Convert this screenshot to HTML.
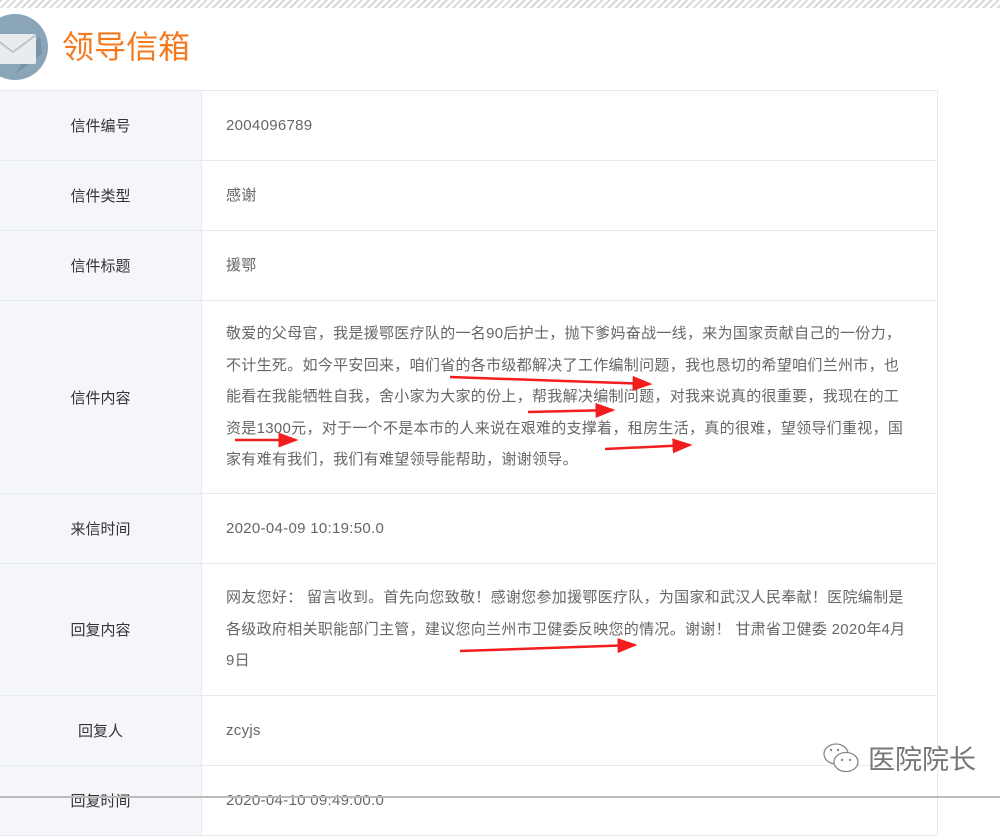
<!DOCTYPE html>
<html><head><meta charset="utf-8"><style>
body{margin:0;width:1000px;height:800px;overflow:hidden;background:#fff;font-family:"Liberation Sans","Noto Sans CJK SC",sans-serif;position:relative}
.hatch{position:absolute;left:0;top:0;width:1000px;height:8px;background:repeating-linear-gradient(135deg,#d8d8d8 0 2px,#fff 2px 5px)}
.title{position:absolute;left:62px;top:26px;font-size:32px;color:#f47a1f;line-height:42px}
table{position:absolute;left:-1px;top:90px;width:939px;border-collapse:collapse;font-size:15px;table-layout:fixed}
td{border:1px solid #e6e9ee;}
td.l{width:199px;background:#f5f6fa;color:#333;text-align:center}
td.r{color:#666;padding:0 20px 0 24px;line-height:31.5px;letter-spacing:0.3px;white-space:nowrap;overflow:hidden}
.bot{position:absolute;left:0;top:796px;width:1000px;height:2px;background:#bbb}
.wm{position:absolute;left:822px;top:738px;font-size:27px;color:#777;display:flex;align-items:center;gap:6px}
</style></head><body>
<div class="hatch"></div>
<svg style="position:absolute;left:-18px;top:14px" width="66" height="66" viewBox="0 0 66 66">
<circle cx="33" cy="33" r="33" fill="#8aa5b8"/>
<path d="M33 60 L60 40 L58 22 Z" fill="#7892a6"/>
<rect x="8" y="20" width="46" height="30" rx="2" fill="#e8ecef"/>
<path d="M8 21 L31 38 L54 21" stroke="#b9c4cc" stroke-width="2" fill="none"/>
</svg>
<div class="title">领导信箱</div>
<table>
<tr style="height:70px"><td class="l">信件编号</td><td class="r">2004096789</td></tr>
<tr style="height:70px"><td class="l">信件类型</td><td class="r">感谢</td></tr>
<tr style="height:70px"><td class="l">信件标题</td><td class="r">援鄂</td></tr>
<tr style="height:193px"><td class="l">信件内容</td><td class="r">敬爱的父母官，我是援鄂医疗队的一名90后护士，抛下爹妈奋战一线，来为国家贡献自己的一份力，<br>不计生死。如今平安回来，咱们省的各市级都解决了工作编制问题，我也恳切的希望咱们兰州市，也<br>能看在我能牺牲自我，舍小家为大家的份上，帮我解决编制问题，对我来说真的很重要，我现在的工<br>资是1300元，对于一个不是本市的人来说在艰难的支撑着，租房生活，真的很难，望领导们重视，国<br>家有难有我们，我们有难望领导能帮助，谢谢领导。</td></tr>
<tr style="height:70px"><td class="l">来信时间</td><td class="r">2020-04-09 10:19:50.0</td></tr>
<tr style="height:132px"><td class="l">回复内容</td><td class="r">网友您好： 留言收到。首先向您致敬！感谢您参加援鄂医疗队，为国家和武汉人民奉献！医院编制是<br>各级政府相关职能部门主管，建议您向兰州市卫健委反映您的情况。谢谢！ 甘肃省卫健委 2020年4月<br>9日</td></tr>
<tr style="height:70px"><td class="l">回复人</td><td class="r">zcyjs</td></tr>
<tr style="height:70px"><td class="l">回复时间</td><td class="r">2020-04-10 09:49:00.0</td></tr>
</table>
<svg style="position:absolute;left:0;top:0" width="1000" height="800">
<defs><marker id="a" markerWidth="8" markerHeight="6" refX="7" refY="3" orient="auto" markerUnits="strokeWidth"><path d="M0 0 L8 3 L0 6 Z" fill="#f41d1d"/></marker></defs>
<g stroke="#f41d1d" stroke-width="2.5" marker-end="url(#a)">
<line x1="450" y1="377" x2="650" y2="384"/>
<line x1="528" y1="412" x2="613" y2="410"/>
<line x1="235" y1="440" x2="296" y2="440"/>
<line x1="605" y1="449" x2="690" y2="445"/>
<line x1="460" y1="651" x2="635" y2="645"/>
</g></svg>
<div class="bot"></div>
<div class="wm"><svg width="40" height="34" viewBox="0 0 40 34"><ellipse cx="14" cy="13" rx="12" ry="10" fill="#fff" stroke="#888" stroke-width="1.3"/><ellipse cx="24" cy="21" rx="12" ry="9.5" fill="#fff" stroke="#888" stroke-width="1.3"/><circle cx="9" cy="9" r="1.2" fill="#888"/><circle cx="16" cy="9" r="1.2" fill="#888"/><circle cx="20" cy="19" r="1.2" fill="#888"/><circle cx="28" cy="19" r="1.2" fill="#888"/></svg>医院院长</div>
</body></html>
